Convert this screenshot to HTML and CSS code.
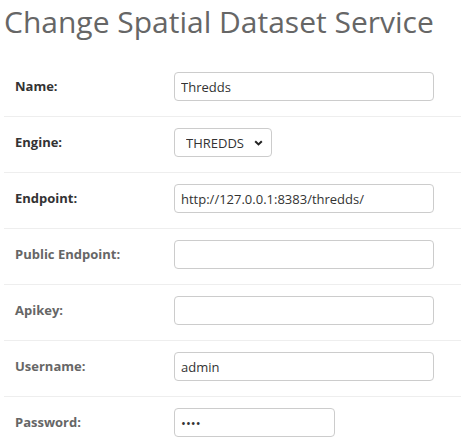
FILE: index.html
```html
<!DOCTYPE html>
<html lang="en">
<head>
<meta charset="utf-8">
<title>Change Spatial Dataset Service</title>
<link rel="stylesheet" href="styles.css">
</head>
<body>
<h1 class="title">Change Spatial Dataset Service</h1>
<form class="form">
  <div class="row">
    <label class="label required" for="f-name">Name:</label>
    <input class="field wide" id="f-name" type="text" value="Thredds">
  </div>
  <div class="row">
    <label class="label required" for="f-engine">Engine:</label>
    <select class="select" id="f-engine"><option>THREDDS</option></select>
  </div>
  <div class="row">
    <label class="label required" for="f-endpoint">Endpoint:</label>
    <input class="field wide" id="f-endpoint" type="text" value="http://127.0.0.1:8383/thredds/">
  </div>
  <div class="row">
    <label class="label" for="f-public">Public Endpoint:</label>
    <input class="field wide" id="f-public" type="text" value="">
  </div>
  <div class="row">
    <label class="label" for="f-apikey">Apikey:</label>
    <input class="field wide" id="f-apikey" type="text" value="">
  </div>
  <div class="row">
    <label class="label" for="f-user">Username:</label>
    <input class="field wide" id="f-user" type="text" value="admin">
  </div>
  <div class="row">
    <label class="label" for="f-pass">Password:</label>
    <input class="field narrow" id="f-pass" type="password" value="pass">
  </div>
</form>
</body>
</html>
```

FILE: styles.css
```css
html, body {
  margin: 0;
  padding: 0;
  background: #fff;
}
body {
  font-family: "Open Sans", "DejaVu Sans", sans-serif;
  color: #333;
  overflow: hidden;
}
.title {
  margin: 0;
  padding: 0 0 0 4px;
  height: 61px;
  font-size: 30px;
  font-weight: 400;
  line-height: 44px;
  color: #666;
  white-space: nowrap;
}
.form {
  margin: 0 0 0 4px;
}
.row {
  display: flex;
  align-items: flex-start;
  padding: 11px 10px 15px 10px;
  border-bottom: 1px solid #eee;
  height: 29px;
}
.label {
  width: 159px;
  flex: none;
  padding-top: 5px;
  padding-left: 1px;
  font-size: 13px;
  font-weight: 700;
  color: #666;
  line-height: 18px;
}
.label.required {
  color: #333;
}
.field, .select {
  box-sizing: border-box;
  height: 29px;
  border: 1px solid #ccc;
  border-radius: 4px;
  font-family: "Open Sans", "DejaVu Sans", sans-serif;
  font-size: 13px;
  color: #333;
  padding: 0 6px;
  background: #fff;
  margin: 0;
  outline: none;
}
.wide { width: 260px; }
.narrow { width: 161px; }
.select {
  width: 98px;
  padding: 0 24px 0 11px;
  appearance: none;
  -webkit-appearance: none;
  background-image: url("data:image/svg+xml;utf8,<svg xmlns='http://www.w3.org/2000/svg' width='9' height='6' viewBox='0 0 9 6'><path d='M1.2 1.2 L4.5 4.4 L7.8 1.2' fill='none' stroke='%23222' stroke-width='2'/></svg>");
  background-repeat: no-repeat;
  background-position: right 8px center;
}
```
